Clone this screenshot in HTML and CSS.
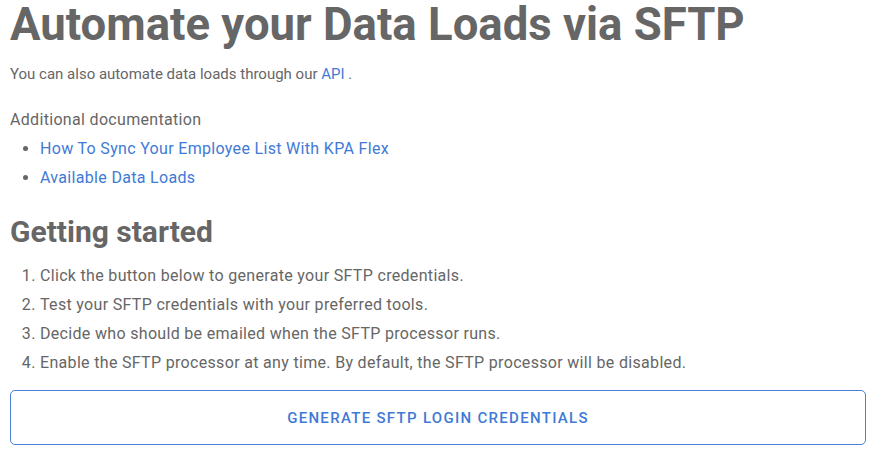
FILE: index.html
```html
<!DOCTYPE html>
<html>
<head>
<meta charset="utf-8">
<link rel="stylesheet" href="styles.css">
</head>
<body>
<main class="page">
  <h1 class="title">Automate your Data Loads via SFTP</h1>
  <p class="intro">You can also automate data loads through our <a class="link" href="#">API</a> .</p>
  <p class="docs-label">Additional documentation</p>
  <ul class="docs-list">
    <li><a class="link" href="#">How To Sync Your Employee List With KPA Flex</a></li>
    <li><a class="link" href="#">Available Data Loads</a></li>
  </ul>
  <h2 class="subtitle">Getting started</h2>
  <ol class="steps">
    <li>Click the button below to generate your SFTP credentials.</li>
    <li>Test your SFTP credentials with your preferred tools.</li>
    <li>Decide who should be emailed when the SFTP processor runs.</li>
    <li>Enable the SFTP processor at any time. By default, the SFTP processor will be disabled.</li>
  </ol>
  <button class="generate-btn" type="button">Generate SFTP Login Credentials</button>
</main>
</body>
</html>
```
FILE: styles.css
```css
html, body {
  margin: 0;
  padding: 0;
  background: #fff;
}
body {
  font-family: Roboto, "Noto Sans", sans-serif;
  color: #666;
}
.page {
  padding: 0 16px 0 10px;
}
.title {
  margin: 0;
  font-size: 45.5px;
  font-weight: 700;
  line-height: 50px;
  color: #666;
}
.intro {
  margin: 14px 0 0;
  font-size: 15px;
  line-height: 20px;
}
.link {
  color: #3f7ad6;
  text-decoration: none;
}
.docs-label {
  margin: 24px 0 0;
  font-size: 16px;
  line-height: 24px;
  letter-spacing: 0.32px;
}
.docs-list {
  margin: 2px 0 0;
  padding-left: 30px;
  font-size: 16px;
  line-height: 29px;
  letter-spacing: 0.32px;
}
.subtitle {
  margin: 20px 0 0;
  font-size: 30px;
  font-weight: 700;
  line-height: 40px;
  color: #666;
}
.steps {
  margin: 9px 0 0;
  padding-left: 30px;
  font-size: 16px;
  line-height: 29px;
  letter-spacing: 0.32px;
}
.generate-btn {
  display: block;
  width: 100%;
  margin-top: 13px;
  height: 55px;
  background: #fff;
  border: 1px solid #4a7fdc;
  border-radius: 5px;
  color: #3f7ad6;
  font-family: Roboto, sans-serif;
  font-size: 15px;
  font-weight: 500;
  letter-spacing: 1.3px;
  text-transform: uppercase;
  cursor: pointer;
}
```
